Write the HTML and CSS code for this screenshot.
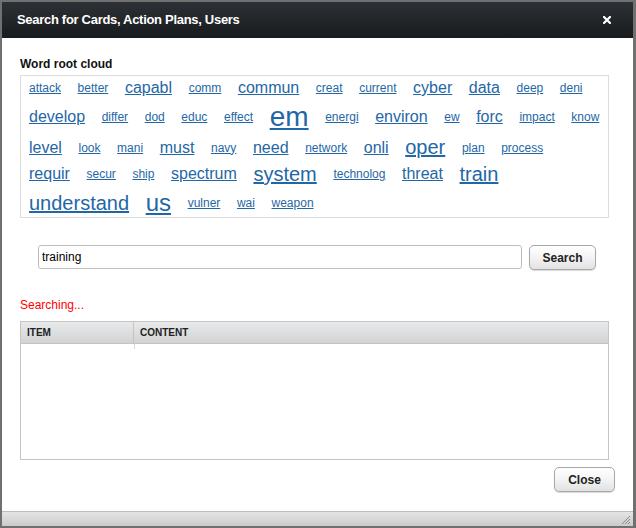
FILE: index.html
```html
<!DOCTYPE html>
<html>
<head>
<meta charset="utf-8">
<link rel="stylesheet" href="styles.css">
</head>
<body>
<div class="dialog">
  <div class="titlebar">
    <span class="title">Search for Cards, Action Plans, Users</span>
    <svg class="close-x" width="8" height="8" viewBox="0 0 8 8"><path d="M1 1 L7 7 M7 1 L1 7" stroke="#fff" stroke-width="2.2" stroke-linecap="square"/></svg>
  </div>
  <div class="body">
    <div class="label">Word root cloud</div>
    <div class="cloud">
      <div class="row">
        <a class="s12">attack</a><a class="s12">better</a><a class="s16">capabl</a><a class="s12">comm</a><a class="s16">commun</a><a class="s12">creat</a><a class="s12">current</a><a class="s16">cyber</a><a class="s16">data</a><a class="s12">deep</a><a class="s12">deni</a>
      </div>
      <div class="row">
        <a class="s16">develop</a><a class="s12">differ</a><a class="s12">dod</a><a class="s12">educ</a><a class="s12">effect</a><a class="s28">em</a><a class="s12">energi</a><a class="s16">environ</a><a class="s12">ew</a><a class="s16">forc</a><a class="s12">impact</a><a class="s12">know</a>
      </div>
      <div class="row">
        <a class="s16">level</a><a class="s12">look</a><a class="s12">mani</a><a class="s16">must</a><a class="s12">navy</a><a class="s16">need</a><a class="s12">network</a><a class="s16">onli</a><a class="s20">oper</a><a class="s12">plan</a><a class="s12">process</a>
      </div>
      <div class="row">
        <a class="s16">requir</a><a class="s12">secur</a><a class="s12">ship</a><a class="s16">spectrum</a><a class="s20">system</a><a class="s12">technolog</a><a class="s16">threat</a><a class="s20">train</a>
      </div>
      <div class="row">
        <a class="s20">understand</a><a class="s24">us</a><a class="s12">vulner</a><a class="s12">wai</a><a class="s12">weapon</a>
      </div>
    </div>
    <div class="search-row">
      <div class="input">training</div>
      <div class="btn search-btn">Search</div>
    </div>
    <div class="status">Searching...</div>
    <div class="table">
      <div class="thead">
        <div class="th col-item">ITEM</div>
        <div class="th col-content">CONTENT</div>
      </div>
      <div class="tbody">
        <div class="trow">
          <div class="td col-item"></div>
          <div class="td col-content"></div>
        </div>
      </div>
    </div>
    <div class="actions">
      <div class="btn close-btn">Close</div>
    </div>
  </div>
  <div class="footer">
    <svg class="grip" width="11" height="11" viewBox="0 0 11 11"><path d="M10 2 L2 10 M10 5 L5 10 M10 8 L8 10" stroke="#8a8a8a" stroke-width="1"/></svg>
  </div>
</div>
</body>
</html>
```

FILE: styles.css
```css
html, body {
  margin: 0;
  padding: 0;
}
body {
  background: #707070;
  width: 636px;
  height: 528px;
  overflow: hidden;
  font-family: "Liberation Sans", Arial, sans-serif;
}
.dialog {
  margin: 2px 3px 2px 2px;
  height: 524px;
  background: #fff;
  display: flex;
  flex-direction: column;
}
.titlebar {
  height: 36px;
  flex: none;
  background: linear-gradient(#2d3135, #181b1e);
  display: flex;
  align-items: center;
  justify-content: space-between;
  padding: 0 22px 0 15px;
}
.title {
  color: #fff;
  font-weight: bold;
  font-size: 13px;
  letter-spacing: -0.3px;
  margin-top: -1px;
}
.close-x {
  display: block;
  margin-top: -1px;
}
.body {
  flex: 1;
  display: flex;
  flex-direction: column;
  padding: 19px 18px 0 18px;
}
.label {
  font-size: 12px;
  font-weight: bold;
  line-height: 14px;
  color: #111;
  margin-bottom: 4px;
}
.cloud {
  border: 1px solid #dcdcdc;
  margin-right: 6px;
  height: 143px;
  box-sizing: border-box;
  padding: 3px 8px 0 8px;
  display: flex;
  flex-direction: column;
  gap: 3.6px;
}
.row {
  display: flex;
  align-items: center;
  gap: 16.6px;
  white-space: nowrap;
}
.row a {
  color: #1f67a6;
  text-decoration: underline;
  line-height: normal;
}
.s12 { font-size: 12px; }
.s16 { font-size: 16px; }
.s20 { font-size: 20px; }
.s24 { font-size: 24px; }
.s28 { font-size: 28px; }
.search-row {
  display: flex;
  align-items: flex-start;
  gap: 7px;
  margin-top: 27px;
  padding-left: 18px;
}
.input {
  width: 484px;
  height: 24px;
  box-sizing: border-box;
  border: 1px solid #bdbdbd;
  border-radius: 3px;
  padding-left: 3px;
  font-size: 12px;
  line-height: 22px;
  color: #000;
}
.btn {
  height: 25px;
  box-sizing: border-box;
  border: 1px solid #a8a8a8;
  border-radius: 5px;
  background: linear-gradient(#ffffff, #f3f3f3 50%, #e2e2e2);
  box-shadow: 0 1px 1px rgba(0,0,0,0.15);
  font-size: 12px;
  font-weight: bold;
  color: #222;
  display: flex;
  align-items: center;
  justify-content: center;
}
.search-btn {
  width: 67px;
}
.status {
  margin-top: 28px;
  font-size: 12px;
  line-height: 14px;
  color: #ff0000;
}
.table {
  margin-top: 9px;
  margin-right: 6px;
  height: 139px;
  box-sizing: border-box;
  border: 1px solid #c4c4c4;
}
.thead {
  display: flex;
  height: 22px;
  box-sizing: border-box;
  border-bottom: 1px solid #c4c4c4;
  background: linear-gradient(#e8e9eb, #d2d3d5);
}
.th {
  font-size: 10px;
  font-weight: bold;
  color: #222;
  display: flex;
  align-items: center;
  padding-left: 6px;
  box-sizing: border-box;
}
.col-item {
  width: 113px;
  border-right: 1px solid #c4c4c4;
}
.col-content {
  flex: 1;
}
.trow {
  display: flex;
  height: 5px;
}
.td.col-item {
  border-right: 1px solid #d8d8d8;
}
.actions {
  display: flex;
  justify-content: flex-end;
  margin-top: 7px;
}
.close-btn {
  width: 61px;
}
.footer {
  height: 15px;
  flex: none;
  box-sizing: border-box;
  border-top: 1px solid #bcbcbc;
  background: linear-gradient(#e4e4e4, #cbcbcb);
  display: flex;
  justify-content: flex-end;
  align-items: flex-end;
  padding: 0 2px 1px 0;
}
.grip {
  display: block;
}
```
